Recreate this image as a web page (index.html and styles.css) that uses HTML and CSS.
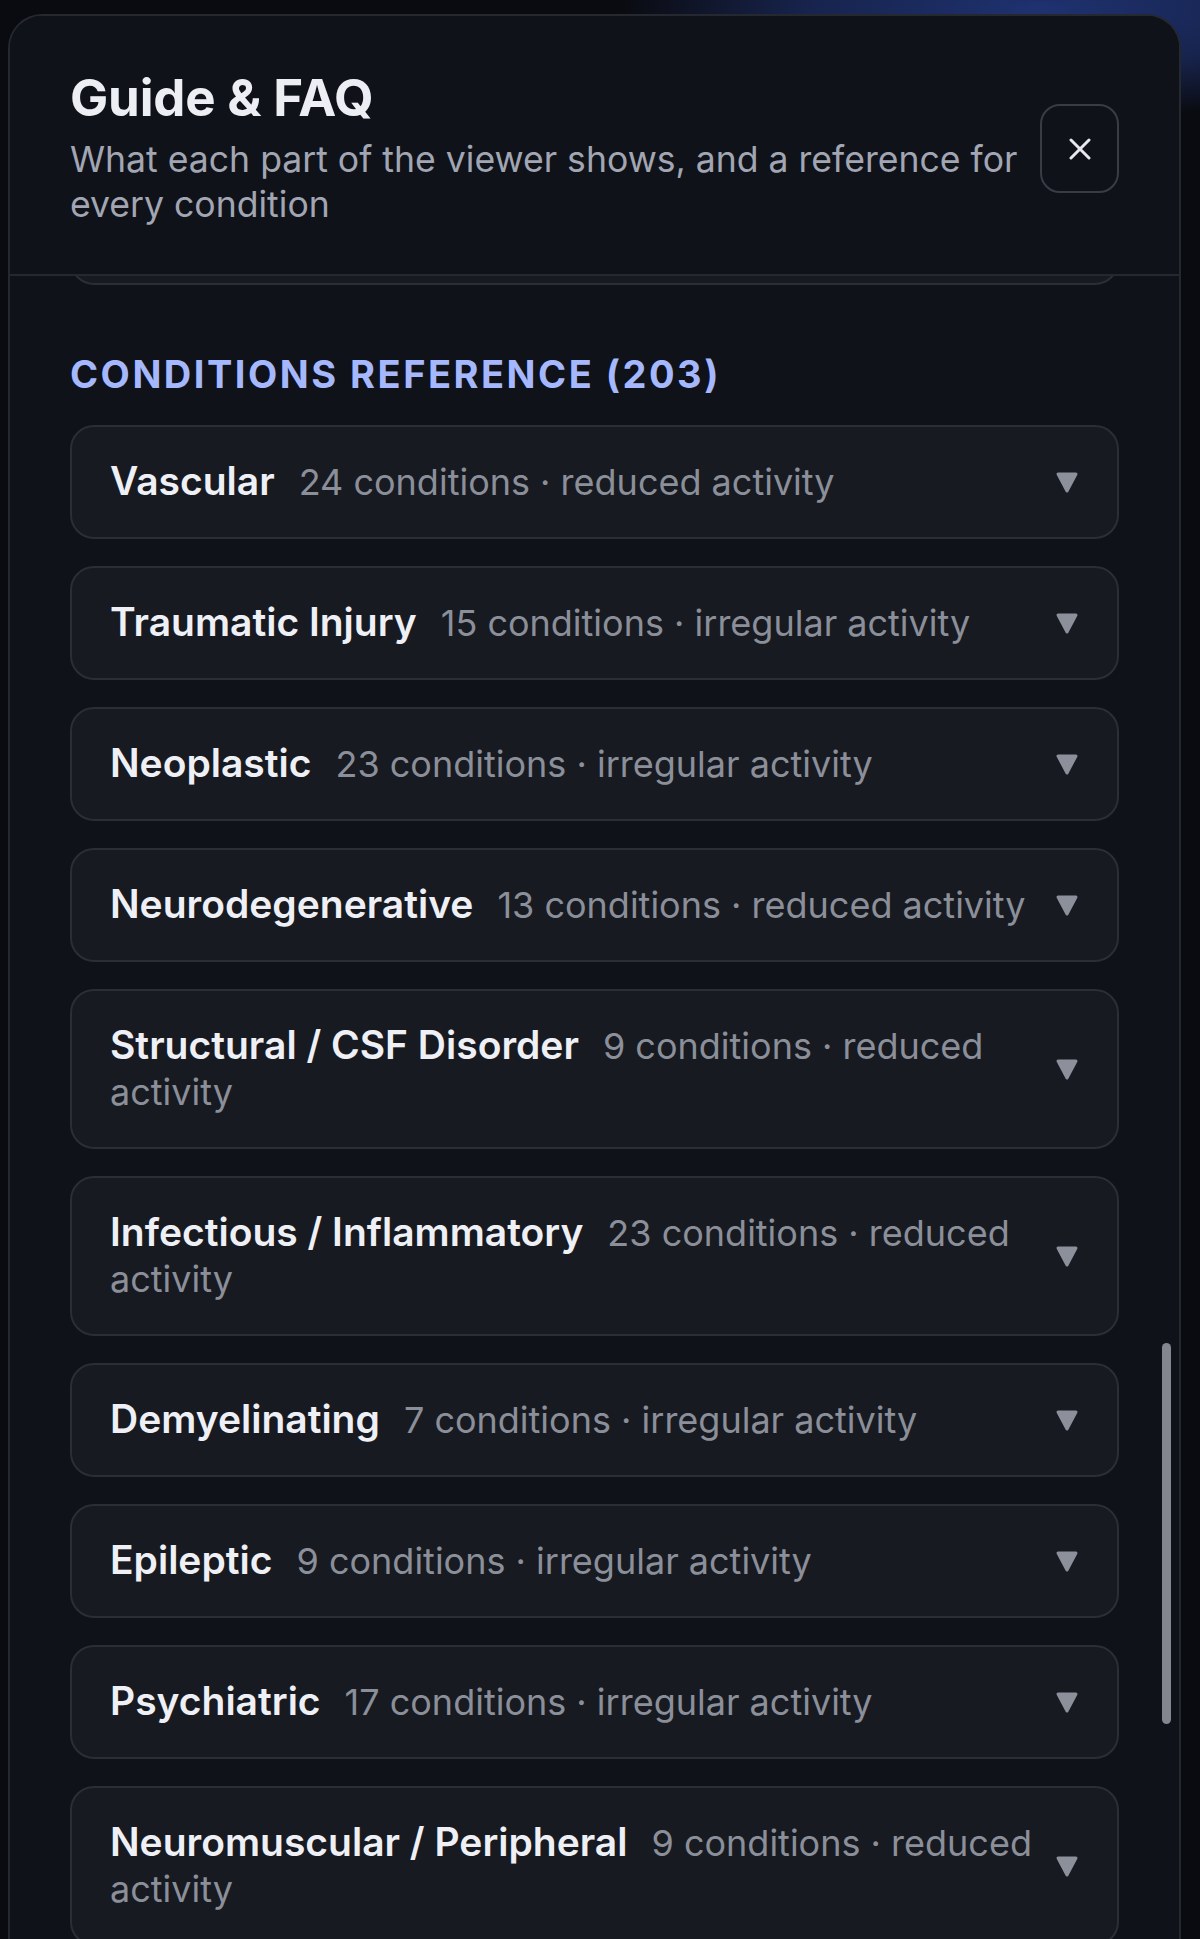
FILE: index.html
```html
<!DOCTYPE html>
<html lang="en">
<head>
<meta charset="utf-8">
<title>Guide &amp; FAQ</title>
<link rel="stylesheet" href="styles.css">
</head>
<body>
<div class="page">
  <div class="modal">
    <header class="modal-head">
      <div class="head-text">
        <h1 class="title">Guide &amp; FAQ</h1>
        <p class="subtitle">What each part of the viewer shows, and a reference for every condition</p>
      </div>
      <button class="close" aria-label="Close">
        <svg viewBox="0 0 22 22" width="22" height="22"><path d="M2 2 L20 20 M20 2 L2 20" stroke="#e6e8ee" stroke-width="3" stroke-linecap="round" fill="none"/></svg>
      </button>
    </header>
    <div class="modal-body">
      <div class="card card-prev"></div>
      <h2 class="section">Conditions Reference (203)</h2>
      <div class="list">
        <div class="card"><div class="card-text"><span class="name">Vascular</span><span class="meta">24 conditions · reduced activity</span></div><svg class="chev" viewBox="0 0 24 23"><path d="M3 3 L21 3 L12 20 Z" fill="#8c909b" stroke="#8c909b" stroke-width="3" stroke-linejoin="round"/></svg></div>
        <div class="card"><div class="card-text"><span class="name">Traumatic Injury</span><span class="meta">15 conditions · irregular activity</span></div><svg class="chev" viewBox="0 0 24 23"><path d="M3 3 L21 3 L12 20 Z" fill="#8c909b" stroke="#8c909b" stroke-width="3" stroke-linejoin="round"/></svg></div>
        <div class="card"><div class="card-text"><span class="name">Neoplastic</span><span class="meta">23 conditions · irregular activity</span></div><svg class="chev" viewBox="0 0 24 23"><path d="M3 3 L21 3 L12 20 Z" fill="#8c909b" stroke="#8c909b" stroke-width="3" stroke-linejoin="round"/></svg></div>
        <div class="card"><div class="card-text"><span class="name">Neurodegenerative</span><span class="meta">13 conditions · reduced activity</span></div><svg class="chev" viewBox="0 0 24 23"><path d="M3 3 L21 3 L12 20 Z" fill="#8c909b" stroke="#8c909b" stroke-width="3" stroke-linejoin="round"/></svg></div>
        <div class="card"><div class="card-text"><span class="name">Structural / CSF Disorder</span><span class="meta">9 conditions · reduced activity</span></div><svg class="chev" viewBox="0 0 24 23"><path d="M3 3 L21 3 L12 20 Z" fill="#8c909b" stroke="#8c909b" stroke-width="3" stroke-linejoin="round"/></svg></div>
        <div class="card"><div class="card-text"><span class="name">Infectious / Inflammatory</span><span class="meta">23 conditions · reduced activity</span></div><svg class="chev" viewBox="0 0 24 23"><path d="M3 3 L21 3 L12 20 Z" fill="#8c909b" stroke="#8c909b" stroke-width="3" stroke-linejoin="round"/></svg></div>
        <div class="card"><div class="card-text"><span class="name">Demyelinating</span><span class="meta">7 conditions · irregular activity</span></div><svg class="chev" viewBox="0 0 24 23"><path d="M3 3 L21 3 L12 20 Z" fill="#8c909b" stroke="#8c909b" stroke-width="3" stroke-linejoin="round"/></svg></div>
        <div class="card"><div class="card-text"><span class="name">Epileptic</span><span class="meta">9 conditions · irregular activity</span></div><svg class="chev" viewBox="0 0 24 23"><path d="M3 3 L21 3 L12 20 Z" fill="#8c909b" stroke="#8c909b" stroke-width="3" stroke-linejoin="round"/></svg></div>
        <div class="card"><div class="card-text"><span class="name">Psychiatric</span><span class="meta">17 conditions · irregular activity</span></div><svg class="chev" viewBox="0 0 24 23"><path d="M3 3 L21 3 L12 20 Z" fill="#8c909b" stroke="#8c909b" stroke-width="3" stroke-linejoin="round"/></svg></div>
        <div class="card"><div class="card-text"><span class="name">Neuromuscular / Peripheral</span><span class="meta">9 conditions · reduced activity</span></div><svg class="chev" viewBox="0 0 24 23"><path d="M3 3 L21 3 L12 20 Z" fill="#8c909b" stroke="#8c909b" stroke-width="3" stroke-linejoin="round"/></svg></div>
      </div>
    </div>
    <div class="scrollbar"></div>
  </div>
</div>
</body>
</html>
```
FILE: styles.css
```css
html, body {
  margin: 0;
  height: 100%;
  overflow: hidden;
}
body {
  background:
    radial-gradient(ellipse 420px 110px at 1040px 10px, rgba(32,52,118,0.95), rgba(32,52,118,0.6) 55%, rgba(32,52,118,0) 100%),
    #0a0b10;
  font-family: Inter, "Noto Sans", sans-serif;
  color: #eef0f5;
}
.page {
  padding: 14px 19px 0 8px;
  height: 100%;
  box-sizing: border-box;
}
.modal {
  position: relative;
  height: 100%;
  background: #10121a;
  border: 2px solid #262830;
  border-bottom: none;
  border-radius: 34px 34px 0 0;
  display: flex;
  flex-direction: column;
  overflow: hidden;
}
.modal-head {
  position: relative;
  z-index: 1;
  display: flex;
  align-items: center;
  gap: 20px;
  padding: 54px 60px 47px 60px;
  border-bottom: 2px solid #262830;
  background: #10121a;
}
.head-text {
  flex: 1;
  min-width: 0;
}
.title {
  margin: 0;
  font-size: 51px;
  line-height: 55px;
  font-weight: 700;
  color: #eceef4;
  letter-spacing: -0.2px;
}
.subtitle {
  margin: 12px 0 0 0;
  font-size: 35.6px;
  line-height: 45px;
  font-weight: 400;
  color: #a1a6b2;
}
.close {
  flex: none;
  width: 79px;
  height: 89px;
  border: 2px solid #393c45;
  border-radius: 20px;
  background: transparent;
  display: flex;
  align-items: center;
  justify-content: center;
  padding: 0;
}
.modal-body {
  flex: 1;
  overflow: hidden;
  padding: 0 60px;
}
.section {
  margin: 66px 0 28px 0;
  font-size: 38px;
  line-height: 46px;
  font-weight: 700;
  letter-spacing: 2.5px;
  text-transform: uppercase;
  color: #a5b8fd;
}
.list {
  display: flex;
  flex-direction: column;
  gap: 27px;
}
.card {
  display: flex;
  align-items: center;
  gap: 12px;
  padding: 32px 38px;
  background: #181a21;
  border: 2px solid #2b2e36;
  border-radius: 24px;
}
.card-prev {
  height: 100px;
  margin-top: -95px;
  padding: 0;
}
.card-text {
  flex: 1;
  min-width: 0;
  font-size: 36px;
  line-height: 46px;
}
.name {
  font-weight: 600;
  font-size: 39px;
  line-height: 1;
  color: #eef0f5;
}
.meta {
  margin-left: 24px;
  font-weight: 400;
  line-height: 1;
  color: #8b8f99;
}
.chev {
  flex: none;
  width: 24px;
  height: 23px;
}
.scrollbar {
  position: absolute;
  left: 1152px;
  top: 1327px;
  width: 9px;
  height: 381px;
  border-radius: 5px;
  background: #83868e;
}
```
